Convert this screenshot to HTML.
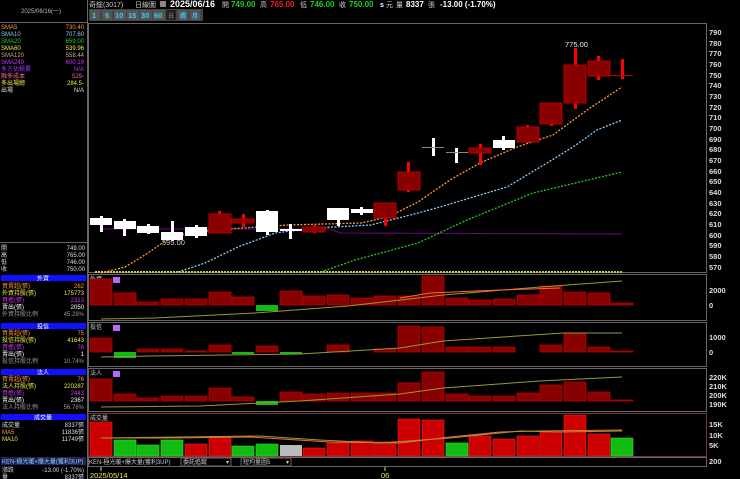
<!DOCTYPE html>
<html><head><meta charset="utf-8"><style>
html,body{margin:0;padding:0;background:#000;}
svg{display:block;font-family:"Liberation Sans","Noto Sans CJK TC",sans-serif;}
</style></head><body>
<svg width="740" height="479" viewBox="0 0 740 479" xmlns="http://www.w3.org/2000/svg">
<rect width="740" height="479" fill="#000"/>
<!-- frames -->
<g stroke="#666" fill="none" stroke-width="1">
<line x1="87.5" y1="0" x2="87.5" y2="479"/>
<line x1="0" y1="22.5" x2="87" y2="22.5"/>
<rect x="88.5" y="23.5" width="618" height="249"/>
<rect x="88.5" y="274.5" width="618" height="46"/>
<rect x="88.5" y="322.5" width="618" height="44"/>
<rect x="88.5" y="368.5" width="618" height="43"/>
<rect x="88.5" y="413.5" width="618" height="43" stroke="#733"/>
<rect x="88.5" y="457.5" width="618" height="9"/>
<line x1="0" y1="242.5" x2="87" y2="242.5"/>
</g>
<!-- header -->
<g font-size="7" fill="#ccc">
<text x="89" y="7">奇鋐(3017)</text>
<text x="135" y="7">日線圖</text>
<rect x="160" y="1" width="6" height="6" fill="#888"/>
<text x="170" y="7" font-size="9" font-weight="bold" fill="#fff">2025/06/16</text>
<text x="222" y="7">開</text><text x="231" y="7" font-size="8" font-weight="bold" fill="#2c2">749.00</text>
<text x="260" y="7">高</text><text x="270" y="7" font-size="8" font-weight="bold" fill="#e22">765.00</text>
<text x="300" y="7">低</text><text x="310" y="7" font-size="8" font-weight="bold" fill="#2c2">746.00</text>
<text x="339" y="7">收</text><text x="349" y="7" font-size="8" font-weight="bold" fill="#2c2">750.00</text>
<text x="380" y="7" font-weight="bold" fill="#fff">s</text><text x="386" y="7">元</text>
<text x="396" y="7">量</text><text x="406" y="7" font-size="8" font-weight="bold" fill="#fff">8337</text>
<text x="428" y="7">張</text>
<text x="440" y="7" font-size="8" font-weight="bold" fill="#fff">-13.00 (-1.70%)</text>
</g>
<rect x="89" y="9" width="114" height="12" fill="#444"/>
<g font-size="7.5" fill="#3cf" font-weight="bold">
<rect x="90" y="10" width="10" height="10" fill="#555"/><text x="92" y="18">1</text>
<rect x="102" y="10" width="10" height="10" fill="#555"/><text x="105" y="18">5</text>
<rect x="114" y="10" width="12" height="10" fill="#555"/><text x="115" y="18">10</text>
<rect x="127" y="10" width="12" height="10" fill="#555"/><text x="128" y="18">15</text>
<rect x="140" y="10" width="12" height="10" fill="#555"/><text x="141" y="18">30</text>
<rect x="153" y="10" width="12" height="10" fill="#555"/><text x="154" y="18">60</text>
<rect x="166" y="10" width="10" height="10" fill="#222"/><text x="168" y="18" fill="#666" font-size="6">日</text>
<rect x="178" y="10" width="10" height="10" fill="#555"/><text x="180" y="18" font-size="6">週</text>
<rect x="190" y="10" width="10" height="10" fill="#555"/><text x="192" y="18" font-size="6">月</text>
</g>
<!-- left panel top -->
<text x="21" y="13" font-size="6" fill="#bbb">2025/06/16(一)</text>
<g font-size="6">
<text x="1" y="29" fill="#f93">SMA5</text><text x="84" y="29" fill="#f93" text-anchor="end">730.40</text>
<text x="1" y="36" fill="#8cf">SMA10</text><text x="84" y="36" fill="#8cf" text-anchor="end">707.60</text>
<text x="1" y="43" fill="#2c2">SMA20</text><text x="84" y="43" fill="#2c2" text-anchor="end">659.00</text>
<text x="1" y="50" fill="#ee4">SMA60</text><text x="84" y="50" fill="#ee4" text-anchor="end">539.96</text>
<text x="1" y="57" fill="#ca7">SMA120</text><text x="84" y="57" fill="#ca7" text-anchor="end">558.44</text>
<text x="1" y="64" fill="#c3f">SMA240</text><text x="84" y="64" fill="#c3f" text-anchor="end">600.19</text>
<text x="1" y="71" fill="#a3f">多方佔積累</text><text x="84" y="71" fill="#a3f" text-anchor="end">N/A</text>
<text x="1" y="78" fill="#f6a">融多成本</text><text x="84" y="78" fill="#f6a" text-anchor="end">529-</text>
<text x="1" y="85" fill="#ee4">多出場總</text><text x="84" y="85" fill="#ee4" text-anchor="end">284.5-</text>
<text x="1" y="92" fill="#ddd">出場</text><text x="84" y="92" fill="#ddd" text-anchor="end">N/A</text>
</g>
<!-- left lower -->
<g font-size="6" fill="#ddd">
<text x="1" y="250">開</text><text x="85" y="250" text-anchor="end">749.00</text>
<text x="1" y="257">高</text><text x="85" y="257" text-anchor="end">765.00</text>
<text x="1" y="264">低</text><text x="85" y="264" text-anchor="end">746.00</text>
<text x="1" y="271">收</text><text x="85" y="271" text-anchor="end">750.00</text>
</g>
<g font-size="6">
<rect x="1" y="275" width="85" height="6" fill="#11f"/><text x="43" y="280.5" fill="#fff" text-anchor="middle">外資</text>
<text x="2" y="288" fill="#f93">買賣超(張)</text><text x="84" y="288" fill="#f93" text-anchor="end">262</text>
<text x="2" y="295" fill="#ee4">外資持股(張)</text><text x="84" y="295" fill="#ee4" text-anchor="end">175773</text>
<text x="2" y="302" fill="#c3f">買進(張)</text><text x="84" y="302" fill="#c3f" text-anchor="end">2313</text>
<text x="2" y="309" fill="#fff">賣出(張)</text><text x="84" y="309" fill="#fff" text-anchor="end">2050</text>
<text x="2" y="316" fill="#999">外資持股比例</text><text x="84" y="316" fill="#999" text-anchor="end">45.28%</text>
<rect x="1" y="323" width="85" height="6" fill="#11f"/><text x="43" y="328.5" fill="#fff" text-anchor="middle">投信</text>
<text x="2" y="335" fill="#f93">買賣超(張)</text><text x="84" y="335" fill="#f93" text-anchor="end">75</text>
<text x="2" y="342" fill="#ee4">投信持股(張)</text><text x="84" y="342" fill="#ee4" text-anchor="end">41643</text>
<text x="2" y="349" fill="#c3f">買進(張)</text><text x="84" y="349" fill="#c3f" text-anchor="end">76</text>
<text x="2" y="356" fill="#fff">賣出(張)</text><text x="84" y="356" fill="#fff" text-anchor="end">1</text>
<text x="2" y="363" fill="#999">投信持股比例</text><text x="84" y="363" fill="#999" text-anchor="end">10.74%</text>
<rect x="1" y="369" width="85" height="6" fill="#11f"/><text x="43" y="374.5" fill="#fff" text-anchor="middle">法人</text>
<text x="2" y="381" fill="#f93">買賣超(張)</text><text x="84" y="381" fill="#f93" text-anchor="end">76</text>
<text x="2" y="388" fill="#ee4">法人持股(張)</text><text x="84" y="388" fill="#ee4" text-anchor="end">220287</text>
<text x="2" y="395" fill="#c3f">買進(張)</text><text x="84" y="395" fill="#c3f" text-anchor="end">2443</text>
<text x="2" y="402" fill="#fff">賣出(張)</text><text x="84" y="402" fill="#fff" text-anchor="end">2367</text>
<text x="2" y="409" fill="#999">法人持股比例</text><text x="84" y="409" fill="#999" text-anchor="end">56.78%</text>
<rect x="1" y="414" width="85" height="6" fill="#11f"/><text x="43" y="419.5" fill="#fff" text-anchor="middle">成交量</text>
<text x="2" y="427" fill="#ddd">成交量</text><text x="84" y="427" fill="#ddd" text-anchor="end">8337張</text>
<text x="2" y="434" fill="#f93">MA5</text><text x="84" y="434" fill="#ddd" text-anchor="end">11836張</text>
<text x="2" y="441" fill="#ee4">MA10</text><text x="84" y="441" fill="#ddd" text-anchor="end">11749張</text>
<rect x="1" y="457" width="85" height="8" fill="#225"/><text x="2" y="463.5" fill="#8cf">KEN-極光暖+爆大量(獲利3UP)</text>
<text x="2" y="472" fill="#ddd">漲跌</text><text x="84" y="472" fill="#ddd" text-anchor="end">-13.00 (-1.70%)</text>
<text x="2" y="479" fill="#ddd">量</text><text x="84" y="479" fill="#ddd" text-anchor="end">8337張</text>
</g>
<!-- right axis -->
<g font-size="7.5" fill="#ddd" font-weight="bold">
<text x="709" y="35">790</text><text x="709" y="46">780</text><text x="709" y="56">770</text><text x="709" y="67">760</text><text x="709" y="78">750</text><text x="709" y="88">740</text><text x="709" y="99">730</text><text x="709" y="110">720</text><text x="709" y="120">710</text><text x="709" y="131">700</text><text x="709" y="142">690</text><text x="709" y="152">680</text><text x="709" y="163">670</text><text x="709" y="174">660</text><text x="709" y="184">650</text><text x="709" y="195">640</text><text x="709" y="206">630</text><text x="709" y="216">620</text><text x="709" y="227">610</text><text x="709" y="238">600</text><text x="709" y="248">590</text><text x="709" y="259">580</text><text x="709" y="270">570</text>
<text x="709" y="293">2000</text><text x="709" y="308">0</text>
<text x="709" y="340">1000</text><text x="709" y="355">0</text>
<text x="709" y="380">220K</text><text x="709" y="389">210K</text><text x="709" y="398">200K</text><text x="709" y="407">190K</text>
<text x="709" y="427">15K</text><text x="709" y="438">10K</text><text x="709" y="448">5K</text>
<text x="709" y="464">200</text>
</g>
<!-- MA lines main -->
<polyline points="101,229 330,229 340,233 622,234" fill="none" stroke="#708" stroke-width="1"/>
<line x1="95" y1="272" x2="622" y2="272" stroke="#cc3" stroke-width="2" stroke-dasharray="2,1"/>
<polyline points="101,273 125,267 148,253 171,237 195,232 228,229 288,225 361,223 388,217 418,202 450,180 480,163 517,147 553,135 587,110 622,87" fill="none" stroke="#f93" stroke-width="1.3" stroke-dasharray="2,1.5"/>
<polyline points="178,272 205,263 238,247 275,233 315,228 371,225 418,213 440,207 480,195 507,187 547,163 573,147 597,130 622,120" fill="none" stroke="#8cf" stroke-width="1.3" stroke-dasharray="2,1.5"/>
<polyline points="321,272 355,260 418,243 467,220 533,193 622,172" fill="none" stroke="#2c2" stroke-width="1.3" stroke-dasharray="2,1.5"/>
<!-- candles -->
<g fill="#fff">
<rect x="100" y="216" width="3" height="16"/><rect x="90" y="218" width="22" height="7"/>
<rect x="123" y="219" width="3" height="17"/><rect x="114" y="221" width="22" height="8"/>
<rect x="147" y="224" width="3" height="10"/><rect x="137" y="226" width="22" height="7"/>
<rect x="171" y="221" width="3" height="20"/><rect x="161" y="232" width="22" height="8"/>
<rect x="195" y="225" width="3" height="13"/><rect x="185" y="227" width="22" height="9"/>
<rect x="266" y="210" width="3" height="25"/><rect x="256" y="211" width="22" height="21"/>
<rect x="289" y="224" width="3" height="15"/><rect x="280" y="229" width="22" height="2"/>
<rect x="337" y="208" width="3" height="18"/><rect x="327" y="208" width="22" height="12"/>
<rect x="360" y="207" width="3" height="8"/><rect x="351" y="209" width="22" height="4"/>
<rect x="432" y="138" width="3" height="18"/><rect x="422" y="147" width="22" height="1" fill="#888"/>
<rect x="455" y="148" width="3" height="15"/><rect x="446" y="152" width="22" height="1" fill="#888"/>
<rect x="502" y="136" width="3" height="14"/><rect x="493" y="140" width="22" height="8"/>
</g>
<g>
<rect x="218" y="211" width="3" height="22" fill="#f00"/><rect x="209" y="214" width="22" height="19" fill="#800" stroke="#b00"/>
<rect x="242" y="214" width="3" height="13" fill="#f00"/><rect x="232" y="219" width="22" height="4" fill="#800" stroke="#b00"/>
<rect x="313" y="225" width="3" height="8" fill="#f00"/><rect x="303" y="227" width="22" height="5" fill="#800" stroke="#b00"/>
<rect x="384" y="203" width="3" height="23" fill="#f00"/><rect x="374" y="203" width="22" height="15" fill="#800" stroke="#b00"/>
<rect x="407" y="162" width="3" height="30" fill="#f00"/><rect x="398" y="172" width="22" height="18" fill="#800" stroke="#b00"/>
<rect x="479" y="144" width="3" height="21" fill="#f00"/><rect x="469" y="148" width="22" height="5" fill="#800" stroke="#b00"/>
<rect x="526" y="125" width="3" height="18" fill="#f00"/><rect x="517" y="127" width="22" height="15" fill="#800" stroke="#b00"/>
<rect x="550" y="103" width="3" height="23" fill="#f00"/><rect x="540" y="103" width="22" height="21" fill="#800" stroke="#b00"/>
<rect x="574" y="48" width="3" height="61" fill="#f00"/><rect x="564" y="65" width="22" height="38" fill="#800" stroke="#b00"/>
<rect x="597" y="56" width="3" height="24" fill="#f00"/><rect x="588" y="61" width="22" height="15" fill="#800" stroke="#b00"/>
<rect x="621" y="59" width="3" height="20" fill="#f00"/><rect x="611" y="75" width="22" height="1" fill="#b00"/>
</g>
<text x="565" y="47" font-size="7.5" fill="#eee">775.00</text>
<text x="162" y="245" font-size="7.5" fill="#ccc">595.00</text>
<!-- panel labels -->
<g font-size="6" fill="#ccc">
<text x="90" y="281">外資</text><rect x="113" y="277" width="7" height="6" fill="#b6f"/>
<text x="90" y="329">投信</text><rect x="113" y="325" width="7" height="6" fill="#b6f"/>
<text x="90" y="375">法人</text><rect x="113" y="371" width="7" height="6" fill="#b6f"/>
<text x="90" y="420">成交量</text>
</g>
<!-- 外資 bars base 305 -->
<g fill="#800" stroke="#b00" stroke-width="0.8">
<rect x="90" y="279" width="22" height="26"/><rect x="114" y="293" width="22" height="12"/><rect x="137" y="302" width="22" height="3"/><rect x="161" y="299" width="22" height="6"/><rect x="185" y="299" width="22" height="6"/><rect x="209" y="292" width="22" height="13"/><rect x="232" y="297" width="22" height="8"/><rect x="280" y="291" width="22" height="14"/><rect x="303" y="296" width="22" height="9"/><rect x="327" y="295" width="22" height="10"/><rect x="351" y="298" width="22" height="7"/><rect x="374" y="296" width="22" height="9"/><rect x="398" y="296" width="22" height="9"/><rect x="422" y="276" width="22" height="29"/><rect x="446" y="298" width="22" height="7"/><rect x="469" y="300" width="22" height="5"/><rect x="493" y="299" width="22" height="6"/><rect x="517" y="295" width="22" height="10"/><rect x="540" y="286" width="22" height="19"/><rect x="564" y="292" width="22" height="13"/><rect x="588" y="293" width="22" height="12"/><rect x="611" y="303" width="22" height="2"/>
</g>
<rect x="256" y="305" width="22" height="6" fill="#1b1"/>
<polyline points="101,319 155,318 255,313 348,306 418,298 443,295 540,287 622,281" fill="none" stroke="#993" stroke-width="1"/>
<polyline points="400,298 430,293 500,290 560,288" fill="none" stroke="#f63" stroke-width="1"/>
<!-- 投信 base 352 -->
<g fill="#800" stroke="#b00" stroke-width="0.8">
<rect x="90" y="338" width="22" height="14"/><rect x="137" y="349" width="22" height="3"/><rect x="161" y="349" width="22" height="3"/><rect x="185" y="351" width="22" height="1"/><rect x="209" y="345" width="22" height="7"/><rect x="256" y="346" width="22" height="6"/><rect x="327" y="345" width="22" height="7"/><rect x="374" y="349" width="22" height="3"/><rect x="398" y="326" width="22" height="26"/><rect x="422" y="327" width="22" height="25"/><rect x="446" y="347" width="22" height="5"/><rect x="469" y="347" width="22" height="5"/><rect x="493" y="347" width="22" height="5"/><rect x="540" y="345" width="22" height="7"/><rect x="564" y="334" width="22" height="18"/><rect x="588" y="347" width="22" height="5"/><rect x="611" y="351" width="22" height="1"/>
</g>
<g fill="#1b1"><rect x="114" y="352" width="22" height="6"/><rect x="232" y="352" width="22" height="2"/><rect x="280" y="352" width="22" height="2"/></g>
<polyline points="101,357 150,356 300,354 400,348 443,341 563,333 622,333" fill="none" stroke="#993" stroke-width="1"/>
<!-- 法人 base 401 -->
<g fill="#800" stroke="#b00" stroke-width="0.8">
<rect x="90" y="379" width="22" height="22"/><rect x="114" y="394" width="22" height="7"/><rect x="137" y="398" width="22" height="3"/><rect x="161" y="396" width="22" height="5"/><rect x="185" y="396" width="22" height="5"/><rect x="209" y="388" width="22" height="13"/><rect x="232" y="397" width="22" height="4"/><rect x="280" y="392" width="22" height="9"/><rect x="303" y="394" width="22" height="7"/><rect x="327" y="393" width="22" height="8"/><rect x="351" y="393" width="22" height="8"/><rect x="374" y="393" width="22" height="8"/><rect x="398" y="383" width="22" height="18"/><rect x="422" y="372" width="22" height="29"/><rect x="446" y="394" width="22" height="7"/><rect x="469" y="396" width="22" height="5"/><rect x="493" y="396" width="22" height="5"/><rect x="517" y="393" width="22" height="8"/><rect x="540" y="385" width="22" height="16"/><rect x="564" y="382" width="22" height="19"/><rect x="588" y="392" width="22" height="9"/><rect x="611" y="400" width="22" height="1"/>
</g>
<rect x="256" y="401" width="22" height="4" fill="#1b1"/>
<polyline points="101,407 200,406 300,401 400,394 443,388 540,381 622,377" fill="none" stroke="#993" stroke-width="1"/>
<!-- 成交量 base 456 -->
<g fill="#c00" stroke="#e22" stroke-width="0.6">
<rect x="90" y="422" width="22" height="34"/><rect x="185" y="444" width="22" height="12"/><rect x="209" y="437" width="22" height="19"/><rect x="303" y="448" width="22" height="8"/><rect x="327" y="443" width="22" height="13"/><rect x="351" y="441" width="22" height="15"/><rect x="374" y="442" width="22" height="14"/><rect x="398" y="419" width="22" height="37"/><rect x="422" y="420" width="22" height="36"/><rect x="469" y="436" width="22" height="20"/><rect x="493" y="439" width="22" height="17"/><rect x="517" y="436" width="22" height="20"/><rect x="540" y="432" width="22" height="24"/><rect x="564" y="415" width="22" height="41"/><rect x="588" y="434" width="22" height="22"/>
</g>
<g fill="#1b1" stroke="#3d3" stroke-width="0.6">
<rect x="114" y="440" width="22" height="16"/><rect x="137" y="445" width="22" height="11"/><rect x="161" y="440" width="22" height="16"/><rect x="232" y="446" width="22" height="10"/><rect x="256" y="444" width="22" height="12"/><rect x="446" y="443" width="22" height="13"/><rect x="611" y="438" width="22" height="18"/>
</g>
<rect x="280" y="445" width="22" height="11" fill="#bbb"/>
<polyline points="101,438 170,438 250,437 330,442 400,443 450,437 500,432 540,431 622,430" fill="none" stroke="#f63" stroke-width="1"/>
<polyline points="101,438 180,437 260,436 320,440 380,443 450,438 520,431 560,432 622,431" fill="none" stroke="#993" stroke-width="1"/>
<!-- bottom bar -->
<g font-size="6" fill="#ccc">
<text x="89" y="464">KEN-極光暖+爆大量(獲利3UP)</text>
<rect x="181" y="458" width="50" height="8" fill="none" stroke="#666"/><text x="183" y="464">委託追蹤</text><text x="226" y="464">▾</text>
<rect x="241" y="458" width="50" height="8" fill="none" stroke="#666"/><text x="243" y="464">短均量圖5</text><text x="286" y="464">▾</text>
</g>
<line x1="101" y1="467" x2="101" y2="471" stroke="#ccc"/>
<line x1="385" y1="467" x2="385" y2="471" stroke="#ccc"/>
<text x="90" y="478" font-size="7.5" fill="#ee4">2025/05/14</text>
<text x="381" y="478" font-size="7.5" fill="#ee4">06</text>
</svg>
</body></html>
